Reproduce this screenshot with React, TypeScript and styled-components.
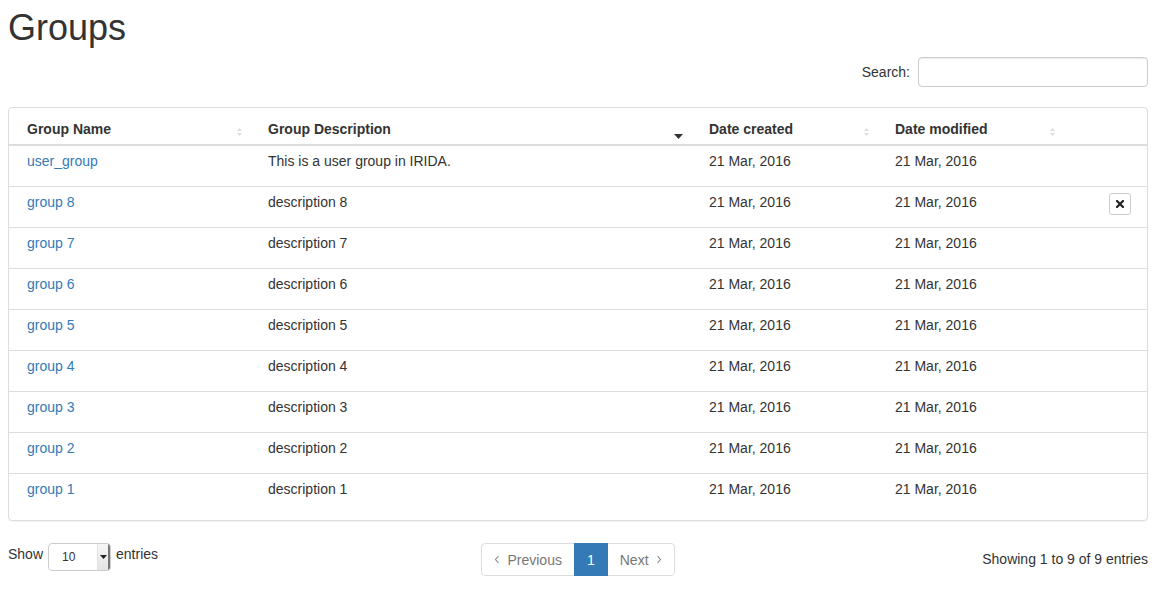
import React from "react";
import styled, { createGlobalStyle } from "styled-components";

const Global = createGlobalStyle`
  html, body { margin: 0; padding: 0; background: #fff; }
  body {
    font-family: "Liberation Sans", Arial, Helvetica, sans-serif;
    font-size: 14px;
    line-height: 20px;
    color: #333;
  }
  * { box-sizing: border-box; }
  svg { display: block; }
`;

const Page = styled.div`
  padding: 8px 22px 0 8px;
`;

const Title = styled.h1`
  margin: 0;
  font-size: 36px;
  line-height: 40px;
  font-weight: 500;
  color: #333;
`;

const SearchRow = styled.div`
  display: flex;
  justify-content: flex-end;
  align-items: center;
  gap: 8px;
  margin-top: 9px;
`;

const SearchInput = styled.input`
  width: 230px;
  height: 30px;
  border: 1px solid #ccc;
  border-radius: 4px;
  box-shadow: inset 0 1px 1px rgba(0, 0, 0, 0.075);
  padding: 5px 10px;
  font: inherit;
  outline: none;
`;

const Panel = styled.div`
  margin-top: 20px;
  border: 1px solid #ddd;
  border-radius: 4px;
  padding: 0 0 6px;
  box-shadow: 0 1px 1px rgba(0, 0, 0, 0.05);
`;

const Table = styled.table`
  width: 100%;
  border-collapse: collapse;
  table-layout: fixed;
`;

const Th = styled.th<{ $w?: number }>`
  width: ${(p) => (p.$w ? `${p.$w}px` : "auto")};
  position: relative;
  text-align: left;
  font-weight: bold;
  padding: 11px 8px 5px;
  border-bottom: 2px solid #ddd;
  &:first-child { padding-left: 18px; }
  &:last-child { padding-right: 16px; }
`;

const SortBoth = styled.span`
  position: absolute;
  right: 18px;
  top: 20px;
  width: 5px;
  height: 8px;
`;

const SortDesc = styled.span`
  position: absolute;
  right: 18px;
  top: 26px;
  width: 9px;
  height: 5px;
`;

const Tr = styled.tr`
  & + & td {
    border-top: 1px solid #ddd;
  }
`;

const Td = styled.td`
  padding: 5px 8px 15px;
  vertical-align: top;
  height: 40px;
  &:first-child { padding-left: 18px; }
  &:last-child { padding-right: 16px; }
`;

const NameLink = styled.a`
  color: #337ab7;
  text-decoration: none;
`;

const RemoveCell = styled(Td)`
  text-align: right;
  padding-top: 6px;
  padding-bottom: 0;
`;

const RemoveBtn = styled.button`
  width: 22px;
  height: 22px;
  border: 1px solid #ccc;
  border-radius: 3px;
  background: #fff;
  padding: 0;
  display: inline-flex;
  align-items: center;
  justify-content: center;
  vertical-align: top;
  cursor: pointer;
`;

const Footer = styled.div`
  display: grid;
  grid-template-columns: 1fr auto 1fr;
  align-items: start;
  margin-top: 22px;
`;

const LengthBox = styled.div`
  display: flex;
  align-items: flex-start;
  gap: 5px;
  line-height: 20px;
`;

const LengthLabel = styled.span`
  padding-top: 1px;
`;

const FakeSelect = styled.div`
  width: 63px;
  height: 28px;
  border: 1px solid #ccc;
  border-radius: 4px;
  display: flex;
  overflow: hidden;
  font-size: 12px;
`;

const SelectValue = styled.span`
  flex: 1;
  padding-left: 13px;
  line-height: 27px;
  color: #333;
`;

const SelectArrow = styled.span`
  width: 13px;
  background: linear-gradient(#f6f6f6, #e4e4e4);
  border-left: 1px solid #e2e2e2;
  border-right: 2px solid #777;
  display: flex;
  align-items: center;
  justify-content: center;
`;

const Pager = styled.ul`
  display: flex;
  list-style: none;
  margin: 0;
  padding: 0;
`;

const PageItem = styled.li<{ $active?: boolean; $first?: boolean; $last?: boolean }>`
  display: flex;
  align-items: center;
  gap: 7px;
  height: 33px;
  padding: 0 12px;
  border: 1px solid ${(p) => (p.$active ? "#337ab7" : "#ddd")};
  margin-left: ${(p) => (p.$first ? "0" : "-1px")};
  background: ${(p) => (p.$active ? "#337ab7" : "#fff")};
  color: ${(p) => (p.$active ? "#fff" : "#777")};
  border-radius: ${(p) =>
    p.$first ? "4px 0 0 4px" : p.$last ? "0 4px 4px 0" : "0"};
  position: relative;
  z-index: ${(p) => (p.$active ? 2 : 1)};
`;

const Info = styled.div`
  text-align: right;
  padding-top: 6px;
`;

const Chevron = ({ dir }: { dir: "l" | "r" }) => (
  <svg width="6" height="9" viewBox="0 0 6 9">
    <path
      d={dir === "l" ? "M4.5 1 L1.5 4.5 L4.5 8" : "M1.5 1 L4.5 4.5 L1.5 8"}
      fill="none"
      stroke="#888"
      strokeWidth="1.1"
    />
  </svg>
);

const BothIcon = () => (
  <SortBoth>
    <svg width="5" height="8" viewBox="0 0 5 8">
      <path d="M0 3 L2.5 0 L5 3 Z" fill="#dcdcdc" />
      <path d="M0 5 L2.5 8 L5 5 Z" fill="#dcdcdc" />
    </svg>
  </SortBoth>
);

const DescIcon = () => (
  <SortDesc>
    <svg width="9" height="5" viewBox="0 0 9 5">
      <path d="M0 0 L9 0 L4.5 5 Z" fill="#333" />
    </svg>
  </SortDesc>
);

const rows = [
  { name: "user_group", desc: "This is a user group in IRIDA." },
  ...[8, 7, 6, 5, 4, 3, 2, 1].map((n) => ({
    name: `group ${n}`,
    desc: `description ${n}`,
  })),
];

export default function App() {
  return (
    <>
      <Global />
      <Page>
        <Title>Groups</Title>
        <SearchRow>
          <label>Search:</label>
          <SearchInput type="search" />
        </SearchRow>
        <Panel>
          <Table>
            <thead>
              <tr>
                <Th $w={251}>
                  Group Name
                  <BothIcon />
                </Th>
                <Th $w={441}>
                  Group Description
                  <DescIcon />
                </Th>
                <Th $w={186}>
                  Date created
                  <BothIcon />
                </Th>
                <Th $w={186}>
                  Date modified
                  <BothIcon />
                </Th>
                <Th />
              </tr>
            </thead>
            <tbody>
              {rows.map((r) => (
                <Tr key={r.name}>
                  <Td>
                    <NameLink href="#">{r.name}</NameLink>
                  </Td>
                  <Td>{r.desc}</Td>
                  <Td>21 Mar, 2016</Td>
                  <Td>21 Mar, 2016</Td>
                  {r.name === "group 8" ? (
                    <RemoveCell>
                      <RemoveBtn aria-label="remove">
                        <svg width="8" height="8" viewBox="0 0 8 8">
                          <path
                            d="M1 1 L7 7 M7 1 L1 7"
                            stroke="#222"
                            strokeWidth="2.2"
                            strokeLinecap="square"
                          />
                        </svg>
                      </RemoveBtn>
                    </RemoveCell>
                  ) : (
                    <Td />
                  )}
                </Tr>
              ))}
            </tbody>
          </Table>
        </Panel>
        <Footer>
          <LengthBox>
            <LengthLabel>Show</LengthLabel>
            <FakeSelect>
              <SelectValue>10</SelectValue>
              <SelectArrow>
                <svg width="7" height="4" viewBox="0 0 7 4">
                  <path d="M0 0 L7 0 L3.5 4 Z" fill="#222" />
                </svg>
              </SelectArrow>
            </FakeSelect>
            <LengthLabel>entries</LengthLabel>
          </LengthBox>
          <Pager>
            <PageItem $first>
              <Chevron dir="l" />
              Previous
            </PageItem>
            <PageItem $active>1</PageItem>
            <PageItem $last>
              Next
              <Chevron dir="r" />
            </PageItem>
          </Pager>
          <Info>Showing 1 to 9 of 9 entries</Info>
        </Footer>
      </Page>
    </>
  );
}
